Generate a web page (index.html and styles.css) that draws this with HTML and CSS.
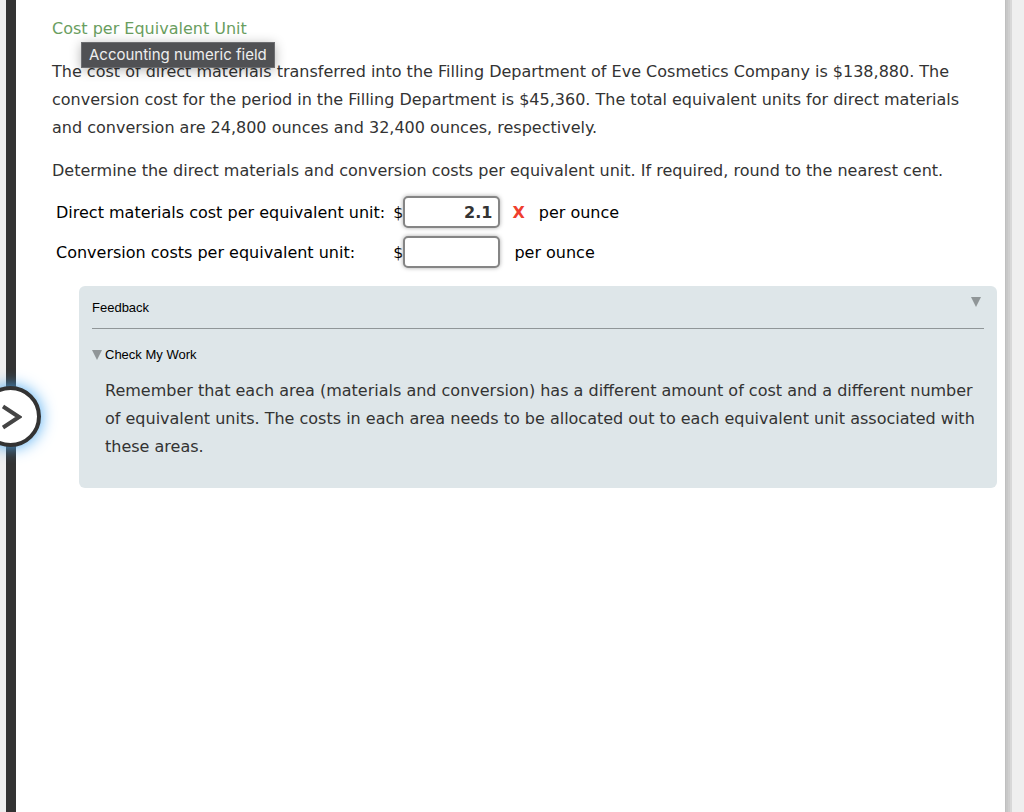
FILE: index.html
```html
<!DOCTYPE html>
<html lang="en">
<head>
    <meta charset="UTF-8">
    <meta name="viewport" content="width=device-width, initial-scale=1.0">
    <title>Cost per Equivalent Unit</title>
    <link rel="stylesheet" href="styles.css">
</head>
<body>
    <div class="sheet">
        <button type="button" class="expand-btn" aria-label="Open panel">
            <svg width="20" height="26" viewBox="0 0 20 26" fill="none" stroke="#444" stroke-width="4">
                <path d="M1 2.5 L17 13 L1 23.5"/>
            </svg>
        </button>

        <main>
            <div class="title-row">
                <h1>Cost per Equivalent Unit</h1>
                <div class="tooltip" role="tooltip" id="field-tip">Accounting numeric field</div>
            </div>

            <div class="question">
                <p>The cost of direct materials transferred into the Filling Department of Eve Cosmetics Company is $138,880. The conversion cost for the period in the Filling Department is $45,360. The total equivalent units for direct materials and conversion are 24,800 ounces and 32,400 ounces, respectively.</p>
                <p>Determine the direct materials and conversion costs per equivalent unit. If required, round to the nearest cent.</p>
            </div>

            <form class="answers">
                <label for="materials">Direct materials cost per equivalent unit:</label>
                <div class="answer">
                    <span>$</span>
                    <input type="text" id="materials" value="2.1" aria-describedby="field-tip">
                    <span class="wrong">X</span>
                    <span class="unit">per ounce</span>
                </div>
                <label for="conversion">Conversion costs per equivalent unit:</label>
                <div class="answer">
                    <span>$</span>
                    <input type="text" id="conversion" aria-describedby="field-tip">
                    <span class="unit">per ounce</span>
                </div>
            </form>

            <section class="feedback">
                <div class="feedback-header">
                    <h2>Feedback</h2>
                    <button type="button" class="toggle" aria-label="Collapse feedback">
                        <svg width="10" height="10" viewBox="0 0 10 10"><path d="M0 0 H10 L5 10 Z" fill="#909698"/></svg>
                    </button>
                </div>
                <div class="hint-header">
                    <button type="button" class="toggle" aria-label="Collapse Check My Work">
                        <svg width="10" height="10" viewBox="0 0 10 10"><path d="M0 0 H10 L5 10 Z" fill="#909698"/></svg>
                    </button>
                    <h3>Check My Work</h3>
                </div>
                <p class="hint">Remember that each area (materials and conversion) has a different amount of cost and a different number of equivalent units. The costs in each area needs to be allocated out to each equivalent unit associated with these areas.</p>
            </section>
        </main>
    </div>
</body>
</html>
```
FILE: styles.css
```css
body {
    margin: 0;
    padding: 0 19px 0 6px;
    background: #efefef;
    font-family: Verdana, "DejaVu Sans", sans-serif;
    font-size: 16px;
    color: #333;
}

.sheet {
    position: relative;
    box-sizing: border-box;
    min-height: 100vh;
    padding: 15px 8px 24px 36px;
    background: #fff;
    border-left: 10px solid #333;
    box-shadow: 1px 0 0 #bfbfbf, 3px 0 0 #c8c8c8, 5px 0 0 #cfcfcf, 7px 0 0 #d8d8d8;
}

h1, h2, h3, p {
    margin: 0;
    font-weight: normal;
}

/* Round handle that sits over the dark rail */
.expand-btn {
    position: absolute;
    top: 386px;
    left: -36px;
    display: flex;
    align-items: center;
    justify-content: flex-end;
    box-sizing: border-box;
    width: 61px;
    height: 61px;
    padding: 0 15px 0 0;
    background: #fff;
    border: 4px solid #333;
    border-radius: 50%;
    box-shadow: 0 0 16px #4aa8f0;
}

.title-row {
    position: relative;
    margin-bottom: 15px;
}

h1 {
    font-size: 16px;
    line-height: 28px;
    color: #6a9e60;
}

.tooltip {
    position: absolute;
    top: 27px;
    left: 29px;
    box-sizing: border-box;
    height: 26px;
    padding: 0 7px;
    border: 1px solid #6c6d70;
    background: #505154;
    box-shadow: 0 2px 12px rgba(0, 0, 0, 0.3);
    color: #eee;
    font-family: Inter, sans-serif;
    font-size: 15px;
    line-height: 24px;
    white-space: nowrap;
}

p {
    margin-bottom: 15px;
    line-height: 28px;
}

.question {
    padding-right: 24px;
}

.answers {
    display: grid;
    grid-template-columns: max-content 1fr;
    align-items: center;
    gap: 8px;
    padding: 0 4px;
    margin-top: -4px;
    color: #000;
}

.answer {
    display: flex;
    align-items: center;
}

.answer input {
    box-sizing: border-box;
    width: 97px;
    height: 32px;
    padding: 0 6px;
    border: 2px solid #858585;
    border-radius: 5px;
    box-shadow: 0 0 4px #aaa;
    background: #fff;
    color: #333;
    font: bold 16px Verdana, "DejaVu Sans", sans-serif;
    text-align: right;
}

.wrong {
    margin-left: 12px;
    color: #ef3e2e;
    font-weight: bold;
}

.unit {
    margin-left: 14px;
}

.feedback {
    margin: 18px 0 0 27px;
    padding: 0 13px 12px;
    border-radius: 6px;
    background: #dee6e9;
}

.feedback-header {
    display: flex;
    align-items: center;
    justify-content: space-between;
    height: 42px;
    border-bottom: 1px solid #909698;
}

.feedback-header .toggle {
    margin: 0 3px 10px 0;
}

.feedback h2, .feedback h3 {
    color: #000;
    font-family: Arial, "Liberation Sans", sans-serif;
    font-size: 13px;
}

.toggle {
    display: flex;
    padding: 0;
    border: 0;
    background: none;
    cursor: pointer;
}

.hint-header {
    display: flex;
    align-items: center;
    gap: 3px;
    padding: 18px 0 15px;
}

.hint {
    margin-left: 13px;
}
```
